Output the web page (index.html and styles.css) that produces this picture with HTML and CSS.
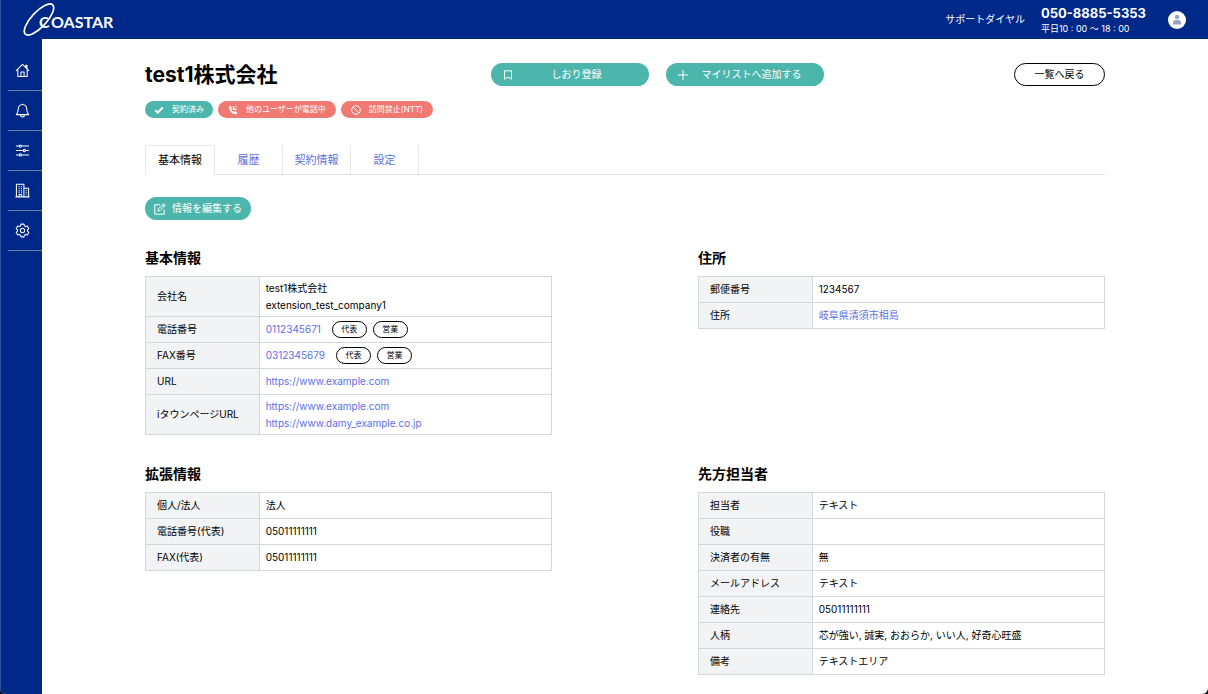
FILE: index.html
```html
<!DOCTYPE html>
<html lang="ja">
<head>
<meta charset="utf-8">
<meta name="viewport" content="width=device-width, initial-scale=1">
<title>test1株式会社 | COASTAR</title>
<link rel="stylesheet" href="styles.css">
</head>
<body>
<div class="app">
  <header class="topbar">
    <a class="logo" href="#" aria-label="COASTAR">
      <svg width="104" height="36" viewBox="0 0 104 36">
        <ellipse cx="17" cy="17.500" rx="20" ry="7.500" transform="rotate(-47 17 17.500)" fill="none" stroke="#fff" stroke-width="1.700"/>
        <text class="logo-text" x="17" y="26">C</text>
        <text class="logo-text" x="29" y="26">OASTAR</text>
      </svg>
    </a>
    <div class="support">
      <span class="support-label">サポートダイヤル</span>
      <div class="support-info">
        <strong class="support-number">050-8885-5353</strong>
        <span class="support-hours">平日10 : 00 〜 18 : 00</span>
      </div>
      <button class="avatar" type="button" aria-label="アカウント">
        <svg width="18" height="18" viewBox="0 0 18 18"><circle cx="9" cy="9" r="9" fill="#fff"/><circle cx="9" cy="6" r="2.200" fill="#98a1bf"/><path d="M5 13.500V12a3 3 0 0 1 3-3h2a3 3 0 0 1 3 3v1.500z" fill="#98a1bf"/></svg>
      </button>
    </div>
  </header>
  <div class="body">
    <nav class="sidebar">
      <a class="nav-item" href="#" aria-label="ホーム"><svg class="nav-icon" viewBox="0 0 16 16"><path d="M1 8.300 8 1.500l7 6.800M3 6.500V14.300h10V6.500M11.500 4.600V2.500h1.300v3.300M6.300 14.300V9.500h3.400v4.800"/></svg></a>
      <a class="nav-item" href="#" aria-label="通知"><svg class="nav-icon" viewBox="0 0 16 16"><path d="M8 .7v1M8 1.500C5 1.500 3.500 3.700 3.500 6.200c0 3.200-.8 4.800-2.100 6.200h13.200c-1.300-1.400-2.100-3-2.100-6.200C12.500 3.700 11 1.500 8 1.500zM5.900 12.600c0 1.500.8 2.400 2.100 2.400s2.100-.9 2.100-2.400"/></svg></a>
      <a class="nav-item" href="#" aria-label="条件"><svg class="nav-icon" viewBox="0 0 16 16"><path d="M1 3.300h3.500M7 3.300h8M1 8h7.800M11.300 8H15M1 12.700h3.500M7 12.700h8"/><circle cx="5.700" cy="3.300" r="1.200"/><circle cx="10" cy="8" r="1.200"/><circle cx="5.700" cy="12.700" r="1.200"/></svg></a>
      <a class="nav-item" href="#" aria-label="企業"><svg class="nav-icon" viewBox="0 0 16 16"><path d="M.5 14.800h15M1.500 14.800V1.300h8v13.500M9.500 5.500h5v9.300M4.400 14.800v-2.500H7v2.500M3.800 4h1.200M6.300 4h1.200M3.800 6.200h1.200M6.300 6.200h1.200M3.800 8.400h1.200M6.300 8.400h1.200M3.800 10.400h1.200M6.300 10.400h1.200M11.500 8h1M11.500 10h1M11.500 12h1"/></svg></a>
      <a class="nav-item" href="#" aria-label="設定"><svg class="nav-icon" viewBox="0 0 16 16"><path d="M6.400 1.200h3.200l.5 1.900 1.100.6 1.900-.5 1.600 2.700-1.400 1.400v1.400l1.400 1.400-1.600 2.700-1.900-.5-1.100.6-.5 1.900H6.400l-.5-1.900-1.100-.6-1.900.5-1.600-2.700 1.400-1.400V7.300L1.300 5.900l1.600-2.700 1.900.5 1.100-.6z"/><circle cx="8" cy="8" r="2.300"/></svg></a>
    </nav>
    <main class="content">
      <div class="title-row">
        <h1 class="title">test1株式会社</h1>
        <div class="actions">
          <button class="pill action" type="button"><svg class="icon" viewBox="0 0 10 10"><path d="M1.500 .8h7v8.400L5 7.200 1.500 9.200z"/></svg><span class="action-label">しおり登録</span></button>
          <button class="pill action" type="button"><svg class="icon" viewBox="0 0 10 10"><path d="M5 0v10M0 5h10"/></svg><span class="action-label">マイリストへ追加する</span></button>
        </div>
        <a class="pill back" href="#">一覧へ戻る</a>
      </div>

      <div class="badges">
        <span class="badge badge-teal"><svg class="icon icon-bold" viewBox="0 0 10 10"><path d="M1.300 5.200 3.800 7.600 8.700 2.500"/></svg>契約済み</span>
        <span class="badge badge-red"><svg class="icon" viewBox="0 0 10 10"><path d="M1 1.300 2.700.7 4 3.200 3.200 4.200C3.700 5.400 4.600 6.300 5.800 6.900l1-.8L9.300 7.500 8.600 9.200C4.500 9.800.6 5.800 1 1.300z" fill="#fff" stroke="none"/><path d="M5.300 1v3.500h3.500M5.600 4.200 8.800 1"/></svg>他のユーザーが電話中</span>
        <span class="badge badge-red"><svg class="icon" viewBox="0 0 10 10"><circle cx="5" cy="5" r="4.300"/><path d="M2 2l6 6"/></svg>訪問禁止(NTT)</span>
      </div>

      <nav class="tabs">
        <a class="tab tab-active" href="#" aria-current="page">基本情報</a>
        <a class="tab" href="#">履歴</a>
        <a class="tab" href="#">契約情報</a>
        <a class="tab" href="#">設定</a>
      </nav>

      <button class="pill edit" type="button"><svg class="icon icon-large" viewBox="0 0 12 12"><path d="M6 1.800H.8v9.400h9.400V6.500M4 8l.4-2L9.700.7l1.600 1.600L6 7.600zM8.500 1.900l1.600 1.600"/></svg>情報を編集する</button>

      <div class="sections">
        <section>
          <h2 class="heading">基本情報</h2>
          <table class="info">
            <tr><th scope="row">会社名</th><td class="multi">test1株式会社<br>extension_test_company1</td></tr>
            <tr><th scope="row">電話番号</th><td><div class="phone"><a href="#">0112345671</a><span class="chips"><span class="chip">代表</span><span class="chip">営業</span></span></div></td></tr>
            <tr><th scope="row">FAX番号</th><td><div class="phone"><a href="#">0312345679</a><span class="chips"><span class="chip">代表</span><span class="chip">営業</span></span></div></td></tr>
            <tr><th scope="row">URL</th><td><a href="#">https://www.example.com</a></td></tr>
            <tr><th scope="row">iタウンページURL</th><td class="multi"><a href="#">https://www.example.com</a><br><a href="#">https://www.damy_example.co.jp</a></td></tr>
          </table>
        </section>
        <section>
          <h2 class="heading">住所</h2>
          <table class="info">
            <tr><th scope="row">郵便番号</th><td>1234567</td></tr>
            <tr><th scope="row">住所</th><td><a href="#">岐阜県清須市相島</a></td></tr>
          </table>
        </section>
        <section>
          <h2 class="heading">拡張情報</h2>
          <table class="info">
            <tr><th scope="row">個人/法人</th><td>法人</td></tr>
            <tr><th scope="row">電話番号(代表)</th><td>05011111111</td></tr>
            <tr><th scope="row">FAX(代表)</th><td>05011111111</td></tr>
          </table>
        </section>
        <section>
          <h2 class="heading">先方担当者</h2>
          <table class="info">
            <tr><th scope="row">担当者</th><td>テキスト</td></tr>
            <tr><th scope="row">役職</th><td></td></tr>
            <tr><th scope="row">決済者の有無</th><td>無</td></tr>
            <tr><th scope="row">メールアドレス</th><td>テキスト</td></tr>
            <tr><th scope="row">連絡先</th><td>05011111111</td></tr>
            <tr><th scope="row">人柄</th><td>芯が強い, 誠実, おおらか, いい人, 好奇心旺盛</td></tr>
            <tr><th scope="row">備考</th><td>テキストエリア</td></tr>
          </table>
        </section>
      </div>
    </main>
  </div>
</div>
</body>
</html>
```
FILE: styles.css
```css
:root {
  --navy: #002888;
  --navy-edge: #33509f;
  --teal: #4db6ac;
  --red: #f07a72;
  --link: #5a6fe6;
  --line: #d3d6dd;
}

* {
  box-sizing: border-box;
}

html {
  background: #0b1020;
}

body {
  margin: 0;
  color: #000;
  font-family: Inter, "Noto Sans CJK JP", sans-serif;
  font-size: 10px;
  line-height: 17px;
}

a {
  color: var(--link);
  text-decoration: none;
}

button {
  font: inherit;
  cursor: pointer;
}

.app {
  display: flex;
  flex-direction: column;
  min-height: 100vh;
  background: #fff;
  border-radius: 0 0 6px 6px;
  overflow: hidden;
}

.topbar {
  display: flex;
  align-items: center;
  justify-content: space-between;
  height: 39px;
  padding: 0 22px 0 21px;
  border-left: 1px solid var(--navy-edge);
  background: var(--navy);
  color: #fff;
}

.logo,
.logo svg {
  display: block;
}

.logo-text {
  fill: #fff;
  font-family: Lato, sans-serif;
  font-size: 16px;
  font-weight: 700;
}

.support {
  display: flex;
  align-items: center;
}

.support-label {
  margin-right: 16px;
}

.support-info {
  display: flex;
  flex-direction: column;
  margin-right: 22px;
  padding-top: 2px;
}

.support-number {
  font-size: 13px;
  line-height: 16px;
}

.support-hours {
  font-size: 9px;
  line-height: 15px;
}

.avatar {
  display: block;
  padding: 0;
  border: 0;
  background: none;
}

.avatar svg {
  display: block;
}

.body {
  display: flex;
  flex: 1;
}

.sidebar {
  flex: none;
  width: 42px;
  padding: 12px 0 0 7px;
  border-left: 1px solid var(--navy-edge);
  background: var(--navy);
}

.nav-item {
  display: flex;
  align-items: center;
  height: 40px;
  padding-left: 7px;
  border-bottom: 1px solid #6f7ea8;
}

.nav-icon {
  width: 15px;
  height: 15px;
  fill: none;
  stroke: #fff;
  stroke-width: 1.1;
  stroke-linejoin: round;
}

.content {
  flex: 1;
  min-width: 0;
  padding: 24px 103px 18px;
}

.title-row {
  display: flex;
  align-items: center;
}

.title {
  flex: 0 0 36%;
  margin: 0;
  font-size: 21px;
  line-height: 23px;
}

.actions {
  display: flex;
  gap: 17px;
}

.pill {
  display: flex;
  align-items: center;
  height: 23px;
  border: 0;
  border-radius: 12px;
  background: var(--teal);
  color: #fff;
}

.action {
  width: 158px;
  padding: 0 8px 0 12px;
}

.action-label {
  flex: 1;
  text-align: center;
}

.icon {
  flex: none;
  width: 10px;
  height: 10px;
  fill: none;
  stroke: #fff;
}

.icon-bold {
  stroke-width: 2;
}

.icon-large {
  width: 12px;
  height: 12px;
}

.back {
  justify-content: center;
  width: 91px;
  margin-left: auto;
  border: 1px solid #000;
  background: #fff;
  color: #000;
}

.badges {
  display: flex;
  gap: 5px;
  margin-top: 15px;
}

.badge {
  display: flex;
  align-items: center;
  gap: 8px;
  height: 17px;
  padding: 0 9px;
  border-radius: 9px;
  color: #fff;
  font-size: 8px;
}

.badge-teal {
  background: var(--teal);
}

.badge-red {
  padding: 0 10px;
  background: var(--red);
}

.tabs {
  display: flex;
  margin-top: 27px;
  border-bottom: 1px solid #dfe2e6;
}

.tab {
  width: 68px;
  height: 29px;
  border-top: 1px solid transparent;
  border-right: 1px solid #e5e7eb;
  font-size: 11px;
  line-height: 28px;
  text-align: center;
}

.tab-active {
  width: 70px;
  height: 30px;
  margin-bottom: -1px;
  border-color: #e5e7eb;
  border-left: 1px solid #e5e7eb;
  background: #fff;
  color: #000;
}

.edit {
  gap: 6px;
  margin-top: 22px;
  padding: 0 9px;
}

.sections {
  display: grid;
  grid-template-columns: 1fr 1fr;
  gap: 29px 146px;
  margin-top: 28px;
}

.heading {
  margin: 0 0 8px;
  font-size: 14px;
  line-height: 20px;
}

.info {
  width: 100%;
  border-collapse: collapse;
  table-layout: fixed;
}

.info th,
.info td {
  height: 26px;
  padding: 0 6px;
  border: 1px solid var(--line);
  text-align: left;
}

.info th {
  width: 28%;
  padding-left: 11px;
  background: #f2f3f5;
  font-weight: 400;
}

.info .multi {
  padding: 3px 6px 2px;
}

.phone {
  display: flex;
  align-items: center;
  gap: 11px;
}

.chips {
  display: flex;
  gap: 6px;
}

.chip {
  width: 35px;
  height: 17px;
  border: 1px solid #000;
  border-radius: 9px;
  font-size: 8px;
  line-height: 15px;
  text-align: center;
}
```
